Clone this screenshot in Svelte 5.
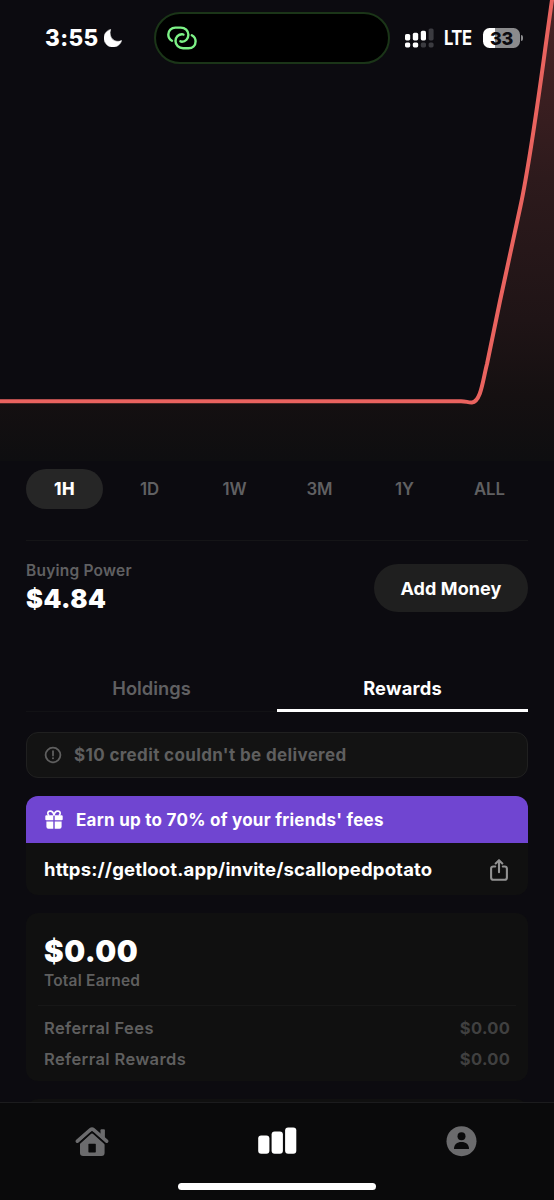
<script lang="ts">
  const ranges = ['1H', '1D', '1W', '3M', '1Y', 'ALL'];
  const tabs = ['Holdings', 'Rewards'];
  const earnings = [
    { label: 'Referral Fees', amount: '$0.00' },
    { label: 'Referral Rewards', amount: '$0.00' }
  ];

  let activeRange = $state('1H');
  let activeTab = $state('Rewards');
</script>

<div class="screen">
  <header class="status-bar">
    <div class="clock">
      <span class="time">3:55</span>
      <svg class="moon" width="18" height="18" viewBox="0 0 18 18">
        <path d="M6.6.4A9 9 0 1 0 17.6 11.6C11.5 14.6 3.9 9 6.6.4Z" fill="#fff" stroke="#fff" stroke-width="0.6" stroke-linejoin="round" />
      </svg>
    </div>
    <div class="island">
      <svg width="30" height="24" viewBox="0 0 30 24" fill="none" stroke="#7df287" stroke-width="2.4" stroke-linecap="round">
        <path d="M5 14.8C2.6 13.5 1.3 11.2 1.3 8.6 1.3 4.4 4.3 1.6 8.4 1.6h5.4c4.3 0 7.6 3.1 7.6 7.2 0 3.9-3 6.9-6.4 6.9-.7 0-1.2-.1-1.6-.4" />
        <path d="M24.8 9.2c2.4 1.3 3.8 3.5 3.8 6.1 0 4.2-3 7-7.1 7h-5.4c-4.3 0-7.6-3.1-7.6-7.2 0-3.9 3-6.9 6.4-6.9.7 0 1.2.1 1.6.4" />
      </svg>
    </div>
    <div class="signals">
      <svg width="29" height="20" viewBox="0 0 29 20">
        <g fill="#fff">
          <rect x="0" y="6" width="5.2" height="6.4" rx="1.6" />
          <rect x="7.8" y="4.8" width="5.4" height="7.6" rx="1.6" />
          <rect x="15.8" y="2.8" width="5.2" height="9.6" rx="1.6" />
          <rect x="0" y="14.4" width="5.2" height="5" rx="1.6" />
          <rect x="7.8" y="14.4" width="5.4" height="5" rx="1.6" />
        </g>
        <g fill="#3b3b40">
          <rect x="23.6" y="0.4" width="5" height="12" rx="1.6" />
          <rect x="15.8" y="14.4" width="5.2" height="5" rx="1.6" />
          <rect x="23.6" y="14.4" width="5" height="5" rx="1.6" />
        </g>
      </svg>
      <span class="network">LTE</span>
      <div class="battery"><span>33</span></div>
      <div class="battery-cap"></div>
    </div>
  </header>

  <svg class="chart" width="554" height="461" viewBox="0 0 554 461">
    <defs>
      <linearGradient id="fill" x1="0" y1="0" x2="0" y2="1">
        <stop offset="0" stop-color="#4b2426" />
        <stop offset="0.4" stop-color="#2d1a1c" />
        <stop offset="0.7" stop-color="#1f1416" />
        <stop offset="0.86" stop-color="#151011" />
        <stop offset="1" stop-color="#0e0e10" />
      </linearGradient>
    </defs>
    <path
      d="M0 401.2H461C466 401.2 468 402.6 472 402.4C481 402 483 379 487 364L500 301L520.5 206C532 152 540 85 552 0V-10H554V461H0Z"
      fill="url(#fill)"
    />
    <path
      d="M-4 401.2H461C466 401.2 468 402.6 472 402.4C481 402 483 379 487 364L500 301L520.5 206C532 152 540 85 552 0L553-8"
      fill="none"
      stroke="#e9635f"
      stroke-width="4"
      stroke-linejoin="round"
    />
  </svg>

  <main>
    <div class="ranges">
      {#each ranges as range}
        <button class="range" class:active={activeRange === range} onclick={() => (activeRange = range)}>
          {range}
        </button>
      {/each}
    </div>

    <section class="power">
      <div>
        <div class="power-label">Buying Power</div>
        <div class="power-value">$4.84</div>
      </div>
      <button class="add-money"><span>Add Money</span></button>
    </section>

    <div class="tabs">
      {#each tabs as tab}
        <button class="tab" class:active={activeTab === tab} onclick={() => (activeTab = tab)}>
          {tab}
        </button>
      {/each}
    </div>

    <div class="alert">
      <svg width="18" height="18" viewBox="0 0 18 18">
        <circle cx="9" cy="9" r="7.4" fill="none" stroke="#5f5f5f" stroke-width="1.8" />
        <path d="M9 5.2v4.3" stroke="#5f5f5f" stroke-width="1.8" stroke-linecap="round" />
        <circle cx="9" cy="12.3" r="1.05" fill="#5f5f5f" />
      </svg>
      <span>$10 credit couldn't be delivered</span>
    </div>

    <section class="invite">
      <div class="promo">
        <svg width="18" height="19" viewBox="0 0 18 19">
          <path d="M1.4 5.2H8.3V10.3H1.4Q.3 10.3.3 9.2V6.3Q.3 5.2 1.4 5.2ZM9.7 5.2h6.9q1.1 0 1.1 1.1v2.9q0 1.1-1.1 1.1H9.7ZM1.4 11.6H8.3V18.7H3.4q-2 0-2-2ZM9.7 11.6h6.9v5.1q0 2-2 2H9.7Z" fill="#fff" />
          <path d="M9 5.5C8.5 2.7 7.3 1.1 5.3 1.1 3.7 1.1 2.8 2 2.8 3.2c0 1 .4 1.7 1.3 2.3M9 5.5c.5-2.8 1.7-4.4 3.7-4.4 1.6 0 2.5.9 2.5 2.1 0 1-.4 1.7-1.3 2.3" fill="none" stroke="#fff" stroke-width="1.6" />
        </svg>
        <span>Earn up to 70% of your friends' fees</span>
      </div>
      <div class="link">
        <span>https://getloot.app/invite/scallopedpotato</span>
        <svg class="share" width="18" height="22" viewBox="0 0 18 22" fill="none" stroke="#929292" stroke-width="2.1" stroke-linecap="round" stroke-linejoin="round">
          <path d="M5.2 7.5H3.4Q1.1 7.5 1.1 9.8v8.6q0 2.3 2.3 2.3h11.2q2.3 0 2.3-2.3V9.8q0-2.3-2.3-2.3h-1.8M9 13.3V1.3M5.7 4.4 9 1.2l3.3 3.2" />
        </svg>
      </div>
    </section>

    <section class="earned">
      <div class="total">$0.00</div>
      <div class="total-label">Total Earned</div>
      <div class="rows">
        {#each earnings as row}
          <div class="row">
            <span class="row-label">{row.label}</span>
            <span class="row-amount">{row.amount}</span>
          </div>
        {/each}
      </div>
    </section>

    <section class="next-card"></section>
  </main>

  <nav>
    <div class="nav-items">
      <svg width="34" height="31" viewBox="0 0 34 31">
        <path d="M2.4 15.2 15.6 3.6q1.4-1.2 2.8 0L31.6 15.2" fill="none" stroke="#6b6b6d" stroke-width="3.6" stroke-linecap="round" stroke-linejoin="round" />
        <path d="M25.5 9V4.2q0-.9.9-.9h2.6q.9 0 .9.9V13Z" fill="#6b6b6d" />
        <path d="M17 6.5 29.6 17.6V26.8q0 3.2-3.2 3.2H8.2Q5 30 5 26.8V17.4Z" fill="#6b6b6d" />
        <path d="M3.6 18 15.6 7.2q1.4-1.2 2.8 0L30.4 18" fill="none" stroke="#0a0a0b" stroke-width="1.6" />
        <rect x="13.4" y="17.8" width="7.4" height="8.6" rx="0.6" fill="#0a0a0b" />
      </svg>
      <svg class="bars" width="39" height="27" viewBox="0 0 39 27" fill="#fff">
        <rect x="0.2" y="8.6" width="11.2" height="18.2" rx="3" />
        <rect x="13.6" y="4.4" width="11.3" height="22.4" rx="3" />
        <rect x="27.1" y="0.4" width="11.2" height="26.4" rx="3" />
      </svg>
      <svg width="31" height="31" viewBox="0 0 31 31">
        <circle cx="15.5" cy="15.2" r="15" fill="#6b6b6d" />
        <circle cx="15.5" cy="10.3" r="4" fill="#0a0a0b" />
        <path d="M8 22.9C8 18.5 11 16.1 15.5 16.1S23 18.5 23 22.9Z" fill="#0a0a0b" />
      </svg>
    </div>
    <div class="home-indicator"></div>
  </nav>
</div>

<style>
  :global(body) {
    margin: 0;
    background: #0c0b10;
  }

  * {
    box-sizing: border-box;
  }

  .screen {
    position: relative;
    display: flex;
    flex-direction: column;
    width: 554px;
    height: 1200px;
    overflow: hidden;
    background: #0c0b10;
    color: #fff;
    font-family: Inter, 'Liberation Sans', sans-serif;
  }

  button {
    padding: 0;
    border: none;
    background: none;
    color: inherit;
    font-family: inherit;
    cursor: pointer;
  }

  svg {
    display: block;
    flex: none;
  }

  /* floats over the top of the chart */
  .status-bar {
    position: absolute;
    top: 12px;
    left: 0;
    right: 0;
    display: flex;
    align-items: center;
    height: 52px;
  }

  .clock {
    display: flex;
    align-items: center;
    gap: 5px;
    width: 154px;
    padding-left: 45px;
  }

  .time {
    width: 54px;
    font-size: 22.5px;
    font-weight: 800;
    letter-spacing: 0.4px;
    line-height: 26px;
    padding-bottom: 1px;
  }

  .island {
    display: flex;
    align-items: center;
    width: 236px;
    height: 52px;
    padding-left: 11px;
    border: 2px solid #1b3518;
    border-radius: 26px;
    background: #000;
  }

  .signals {
    display: flex;
    align-items: center;
    padding-left: 15px;
  }

  .network {
    width: 39px;
    margin-left: 10px;
    font-size: 19.5px;
    font-weight: 700;
    letter-spacing: -0.6px;
    transform: scaleX(0.85);
    transform-origin: left;
  }

  .battery {
    display: flex;
    align-items: center;
    justify-content: center;
    width: 37px;
    height: 20px;
    border-radius: 6.5px;
    background: linear-gradient(to right, #fff 12px, #8b8b8d 12px);
    color: #0c0b10;
    font-size: 18px;
    font-weight: 800;
    letter-spacing: -0.3px;
  }

  .battery-cap {
    width: 2px;
    height: 6px;
    margin-left: 1px;
    border-radius: 0 2px 2px 0;
    background: #8b8b8d;
  }

  main {
    display: flex;
    flex: 1;
    flex-direction: column;
    min-height: 0;
    padding: 8px 26px 0;
    overflow: hidden;
  }

  main > * {
    flex: none;
  }

  .ranges {
    display: flex;
    gap: 8px;
    padding-bottom: 31px;
    border-bottom: 1px solid #151517;
  }

  .range {
    flex: 1;
    height: 40px;
    border-radius: 20px;
    color: #606062;
    font-size: 16.8px;
    font-weight: 600;
  }

  .range.active {
    background: #262626;
    color: #fff;
    font-weight: 800;
    letter-spacing: 0.4px;
  }

  .power {
    display: flex;
    align-items: center;
    justify-content: space-between;
    height: 48px;
    margin-top: 23px;
  }

  .power-label {
    color: #606062;
    font-size: 15.5px;
    font-weight: 600;
    line-height: 20px;
    letter-spacing: 0.22px;
  }

  .power-value {
    margin-top: 2px;
    font-size: 25.5px;
    font-weight: 900;
    line-height: 32px;
    letter-spacing: 0.5px;
  }

  .add-money {
    width: 154px;
    height: 48px;
    border-radius: 24px;
    background: #1f1f1f;
    font-size: 18px;
    font-weight: 700;
    letter-spacing: 0.1px;
  }

  .tabs {
    display: flex;
    height: 48px;
    margin-top: 52px;
    border-bottom: 1px solid #121215;
  }

  .tab {
    flex: 1;
    height: 48px;
    padding-top: 2px;
    border-bottom: 3px solid transparent;
    color: #606062;
    font-size: 18.3px;
    font-weight: 600;
  }

  .tab.active {
    border-color: #fff;
    color: #fff;
    font-weight: 700;
    letter-spacing: 0.2px;
  }

  .alert {
    display: flex;
    align-items: center;
    gap: 12px;
    height: 46px;
    margin-top: 20px;
    padding-left: 17px;
    border: 1px solid #202020;
    border-radius: 12px;
    background: #131313;
    color: #5f5f5f;
    font-size: 17px;
    font-weight: 700;
    letter-spacing: 0.36px;
  }

  .invite {
    height: 99px;
    margin-top: 18px;
    border-radius: 12px;
    background: #101010;
    overflow: hidden;
  }

  .promo {
    display: flex;
    align-items: center;
    gap: 13px;
    height: 47px;
    padding-left: 19px;
    background: #7045d1;
    font-size: 17px;
    font-weight: 700;
    letter-spacing: 0.26px;
  }

  .link {
    display: flex;
    align-items: center;
    justify-content: space-between;
    height: 52px;
    padding: 0 20px 0 18px;
    font-size: 18.5px;
    font-weight: 700;
    letter-spacing: 0.15px;
  }

  .share {
    margin-top: 2px;
  }

  .earned {
    height: 168px;
    margin-top: 18px;
    padding: 19px 12px 0;
    border-radius: 12px;
    background: #101010;
  }

  .total {
    padding-left: 6px;
    font-size: 29.5px;
    font-weight: 900;
    line-height: 38px;
    letter-spacing: 0.5px;
  }

  .total-label {
    padding-left: 6px;
    color: #5f5f5f;
    font-size: 15.5px;
    font-weight: 600;
    line-height: 22px;
    letter-spacing: 0.2px;
  }

  .rows {
    margin-top: 13px;
    padding: 7px 6px 0;
    border-top: 1px solid #171717;
  }

  .row {
    display: flex;
    justify-content: space-between;
    font-size: 16.5px;
    line-height: 30.5px;
    letter-spacing: 0.38px;
  }

  .row-label {
    color: #5f5f5f;
    font-weight: 600;
  }

  .row-amount {
    margin-right: -0.4px;
    color: #404040;
    font-weight: 700;
  }

  .next-card {
    height: 60px;
    margin-top: 18px;
    border-radius: 12px;
    background: #101010;
  }

  nav {
    height: 98px;
    border-top: 1px solid #1c1c1e;
    background: #0a0a0b;
  }

  .nav-items {
    display: grid;
    grid-template-columns: repeat(3, 1fr);
    align-items: center;
    justify-items: center;
    height: 76px;
  }

  .bars {
    margin: 0 0 1px 1px;
  }

  .home-indicator {
    width: 198px;
    height: 7px;
    margin: 4px auto 0;
    border-radius: 4px;
    background: #fff;
  }
</style>
